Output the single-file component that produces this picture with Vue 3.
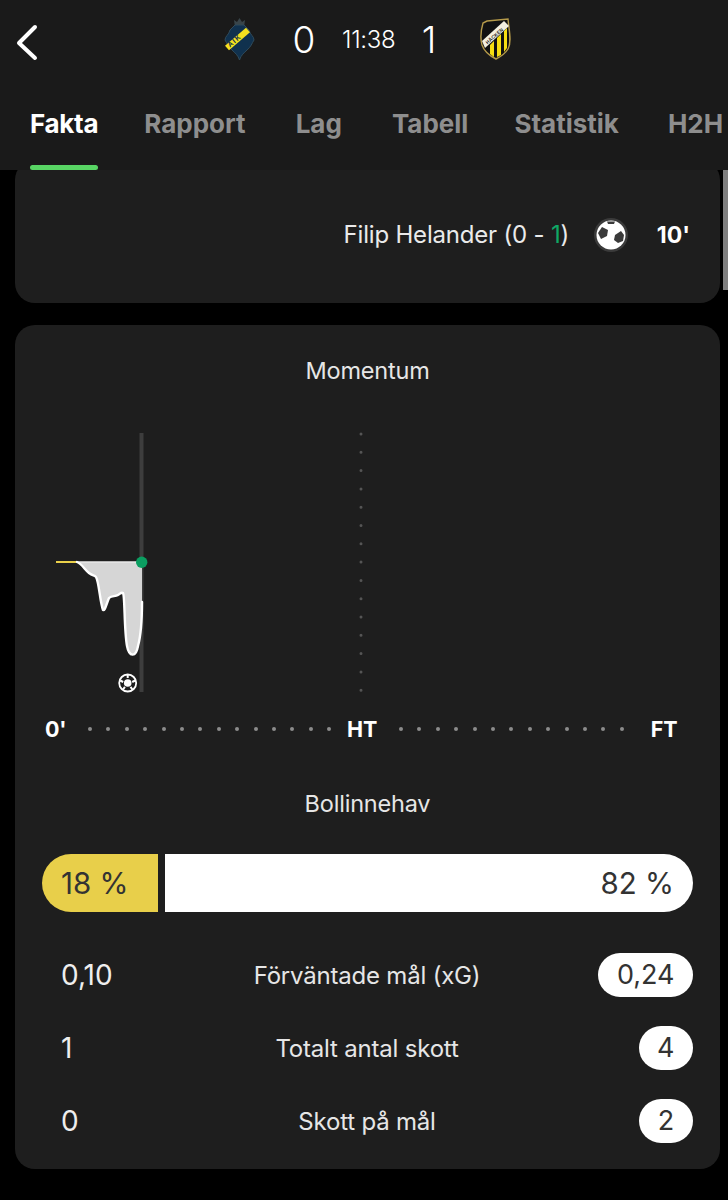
<script setup>
const tabs = ['Fakta', 'Rapport', 'Lag', 'Tabell', 'Statistik', 'H2H']
const leftDots = Array.from({ length: 14 })
const rightDots = Array.from({ length: 13 })
const stats = [
  { left: '0,10', label: 'Förväntade mål (xG)', right: '0,24' },
  { left: '1', label: 'Totalt antal skott', right: '4' },
  { left: '0', label: 'Skott på mål', right: '2' },
]
</script>

<template>
  <div class="page">
    <header class="header">
      <div class="top">
        <svg class="back" width="24" height="38" viewBox="0 0 24 38">
          <path d="M20 4 L4 20 L20 35" fill="none" stroke="#fff" stroke-width="4" stroke-linecap="round" stroke-linejoin="round" />
        </svg>
        <div class="score">
          <svg class="crest" width="31" height="44" viewBox="0 0 31 44">
            <path d="M11 10 L10 3 L13 5 L15.500 1 L18 5 L21 3 L20 10 Z" fill="#39454a" />
            <path d="M6 13 L11 8 H20 L25 13 C26 18 30 19 30 23 C28 26 27 30 23 33 C20 36 17 38 15.500 43 C14 38 11 36 8 33 C4 30 3 26 1 23 C1 19 5 18 6 13 Z" fill="#10314e" stroke="#2f4a5a" stroke-width="1" />
            <path d="M1 28.700 L22 10.700 L26 15.300 L5 33.300 Z" fill="#f4e01f" />
            <text transform="translate(6 30.500) rotate(-40)" class="crest-text aik">AIK</text>
          </svg>
          <span class="goal goal-left">0</span>
          <span class="clock">11:38</span>
          <span class="goal goal-right">1</span>
          <svg class="crest crest-right" width="32" height="42" viewBox="0 0 32 42">
            <path d="M7 3 L28 1 C29 12 32 24 28 31 C25 36 20 39 16 41 C10 38 4 33 2 27 C0 20 1 12 3 5 Z" fill="#111" stroke="#b59a4a" stroke-width="1.400" />
            <g fill="#f5dd12">
              <path d="M10 27 L14 23 V39 L10 36 Z" />
              <path d="M17 20 L21 16 V37 L17 39 Z" />
              <path d="M24 13 L27 10 V30 L24 34 Z" />
            </g>
            <path d="M2 23 L24 3 L29 8 L5 30 Z" fill="#f3efdf" />
            <text transform="translate(7.500 26.500) rotate(-42)" class="crest-text hacken">HÄCKEN</text>
          </svg>
        </div>
      </div>
      <nav class="tabs">
        <div v-for="(t, i) in tabs" :key="t" class="tab" :class="{ active: i === 0 }">{{ t }}</div>
      </nav>
    </header>

    <main class="content">
      <section class="card event-card">
        <span class="scorer">Filip Helander (0 - <span class="green">1</span>)</span>
        <svg class="ball" width="38" height="38" viewBox="0 0 38 38">
          <circle cx="19" cy="19" r="17" fill="#3b3b3b" />
          <circle cx="19" cy="19" r="14.500" fill="#fff" />
          <path d="M6 17 L10 11 L16 14 L15 20 L9 23 Z" fill="#3a3a3a" />
          <path d="M23 19 L29 15 L32 19 L31 25 L26 27 L22 24 Z" fill="#3a3a3a" />
          <path d="M15 5.500 L23 5.500 L22 8 L16 8 Z" fill="#3a3a3a" />
        </svg>
        <span class="minute">10'</span>
      </section>

      <section class="card stats-card">
        <h2 class="title">Momentum</h2>
        <svg class="chart" width="650" height="280" viewBox="0 0 650 280">
          <rect x="99.500" y="13" width="4" height="259" fill="#3d3d3d" />
          <line x1="321" y1="14" x2="321" y2="273" stroke="#555" stroke-width="3" stroke-linecap="round" stroke-dasharray="0 18.300" />
          <path d="M16 142 H37" stroke="#ead04a" stroke-width="2" fill="none" />
          <path d="M37 142 C42 144 45 150 49 153 C53 156 54 155 56 157 C59 162 60 182 63 190 C65 191 66 185 69 178 C72 175 75 177 78 175 C80 174 81 172 83 173 C85 176 84 210 87 226 C89 237 96 238 98 226 C101 215 102 200 102 182 V142 Z" fill="#d6d6d6" stroke="none" />
          <path d="M37 142 H102" stroke="#e8e8e8" stroke-width="1.500" fill="none" />
          <path d="M37 142 C42 144 45 150 49 153 C53 156 54 155 56 157 C59 162 60 182 63 190 C65 191 66 185 69 178 C72 175 75 177 78 175 C80 174 81 172 83 173 C85 176 84 210 87 226 C89 237 96 238 98 226 C101 215 102 200 102 182" stroke="#fff" stroke-width="2.400" fill="none" stroke-linecap="round" />
          <circle cx="101.700" cy="142.300" r="5.700" fill="#0b9e61" />
          <g transform="translate(87.700 263)">
            <circle r="8.500" fill="none" stroke="#fff" stroke-width="1.800" />
            <circle r="3.800" fill="#fff" />
            <path d="M0 -8 V-5 M7.500 -2.500 L4.500 -1 M-7.500 -2.500 L-4.500 -1 M4.700 6.500 L2.800 3.800 M-4.700 6.500 L-2.800 3.800" stroke="#fff" stroke-width="2" />
          </g>
        </svg>

        <div class="axis">
          <span class="axis-label zero">0'</span>
          <div class="dots dots-left"><i v-for="(_, i) in leftDots" :key="i"></i></div>
          <span class="axis-label ht">HT</span>
          <div class="dots dots-right"><i v-for="(_, i) in rightDots" :key="i"></i></div>
          <span class="axis-label ft">FT</span>
        </div>

        <h2 class="title possession-title">Bollinnehav</h2>
        <div class="possession">
          <div class="poss-home">18 %</div>
          <div class="poss-away">82 %</div>
        </div>

        <div class="stats">
          <div v-for="s in stats" :key="s.label" class="stat">
            <span class="stat-left">{{ s.left }}</span>
            <span class="stat-label">{{ s.label }}</span>
            <span class="stat-right"><span class="pill">{{ s.right }}</span></span>
          </div>
        </div>
      </section>
    </main>

    <div class="scrollbar"></div>
  </div>
</template>

<style>
html, body { margin: 0; background: #000; }
</style>

<style scoped>
.page {
  position: relative;
  width: 728px;
  height: 1200px;
  overflow: hidden;
  background: #000;
  color: #fff;
  font-family: Inter, "Liberation Sans", sans-serif;
}
.header {
  position: relative;
  z-index: 2;
  height: 170px;
  background: #1a1a1a;
  overflow: hidden;
}
.top {
  position: relative;
  height: 78px;
  display: flex;
  align-items: center;
}
.back { position: absolute; left: 15px; top: 23px; }
.score {
  display: flex;
  align-items: center;
  height: 78px;
  padding-left: 224px;
}
.crest { flex: none; display: block; }
.crest-right { margin-left: 39px; }
.crest-text { font-family: "Liberation Sans", sans-serif; font-weight: 700; }
.aik { font-size: 7px; fill: #10314e; letter-spacing: 1.300px; }
.hacken { font-size: 4.800px; fill: #222; letter-spacing: 0.200px; }
.goal { font-size: 37px; font-weight: 300; width: 24px; text-align: center; flex: none; }
.goal-left { margin-left: 37px; }
.goal-right { margin-left: 22px; }
.clock { font-size: 24px; font-weight: 300; margin-left: 26px; width: 53px; letter-spacing: -0.300px; white-space: nowrap; flex: none; }
.tabs {
  display: flex;
  gap: 48px;
  padding-left: 30px;
  white-space: nowrap;
  margin-top: 28px;
}
.tab {
  position: relative;
  font-size: 26px;
  font-weight: 700;
  line-height: 36px;
  color: #8e8e8e;
  height: 64px;
  flex: none;
}
.tab:nth-child(2) { margin-left: -2px; }
.tab:nth-child(3) { margin-left: 2px; }
.tab:nth-child(4) { margin-left: 2px; }
.tab:nth-child(5) { margin-left: -2px; }
.tab:nth-child(6) { margin-left: 1px; }
.tab.active { color: #fff; letter-spacing: -0.300px; }
.tab.active::after {
  content: "";
  position: absolute;
  left: 0;
  right: 0;
  top: 59px;
  height: 5px;
  border-radius: 3px;
  background: #58d564;
}
.content {
  margin: -10px 8px 0 15px;
  display: flex;
  flex-direction: column;
  gap: 22px;
}
.card {
  background: #1e1e1e;
  border-radius: 20px;
}
.event-card {
  height: 143px;
  box-sizing: border-box;
  padding: 6px 30px 0 0;
  display: flex;
  align-items: center;
  justify-content: flex-end;
}
.scorer { font-size: 24px; color: #eaeaea; letter-spacing: -0.200px; }
.green { color: #0fa866; }
.ball { margin-left: 23px; }
.minute { margin-left: 26px; font-size: 23px; font-weight: 700; width: 34px; text-align: right; }
.stats-card {
  height: 844px;
  box-sizing: border-box;
  padding-top: 33px;
  display: flex;
  flex-direction: column;
  align-items: stretch;
}
.title {
  margin: 0;
  font-size: 23.500px;
  line-height: 26px;
  font-weight: 400;
  text-align: center;
  color: #e6e6e6;
  letter-spacing: -0.200px;
}
.chart { margin: 36px 0 0 25px; display: block; flex: none; }
.axis {
  height: 28px;
  margin-top: 15px;
  display: flex;
  align-items: center;
  padding-left: 30px;
}
.axis-label { font-size: 21.500px; font-weight: 700; line-height: 28px; letter-spacing: -0.200px; flex: none; }
.zero { width: 22px; }
.ht { width: 30px; margin-left: 16px; }
.ft { margin-left: 27px; }
.dots { display: flex; align-items: center; gap: 14.400px; flex: none; }
.dots i { display: block; width: 4px; height: 4px; border-radius: 50%; background: #8c8c8c; }
.dots-left { margin-left: 21px; }
.dots-right { margin-left: 22px; }
.possession-title { margin-top: 48px; }
.possession {
  margin: 37px 27px 0 27px;
  height: 58px;
  display: flex;
  gap: 7px;
  font-size: 29.500px;
  color: #333;
  line-height: 58px;
}
.poss-home {
  width: 116px;
  box-sizing: border-box;
  padding-left: 19px;
  background: #e8cf4a;
  border-radius: 29px 0 0 29px;
  white-space: nowrap;
}
.poss-away {
  flex: 1;
  box-sizing: border-box;
  padding-right: 19px;
  text-align: right;
  background: #fff;
  border-radius: 0 29px 29px 0;
}
.stats { display: flex; flex-direction: column; gap: 29px; padding: 14px 27px 0 46px; margin-top: 27px; }
.stat {
  height: 44px;
  display: grid;
  grid-template-columns: 130px 1fr 130px;
  align-items: center;
}
.stat-left { font-size: 28px; color: #eee; }
.stat-label { text-align: center; font-size: 24px; color: #e6e6e6; letter-spacing: -0.200px; transform: translateX(-10px); white-space: nowrap; }
.stat-right { display: flex; justify-content: flex-end; }
.pill {
  display: block;
  min-width: 17px;
  padding: 0 18.500px;
  height: 44px;
  line-height: 44px;
  border-radius: 22px;
  background: #fff;
  color: #333;
  font-size: 27px;
  text-align: center;
}
.scrollbar {
  position: absolute;
  z-index: 3;
  right: 0;
  top: 170px;
  width: 5px;
  height: 120px;
  background: #7f7f7f;
}
</style>
